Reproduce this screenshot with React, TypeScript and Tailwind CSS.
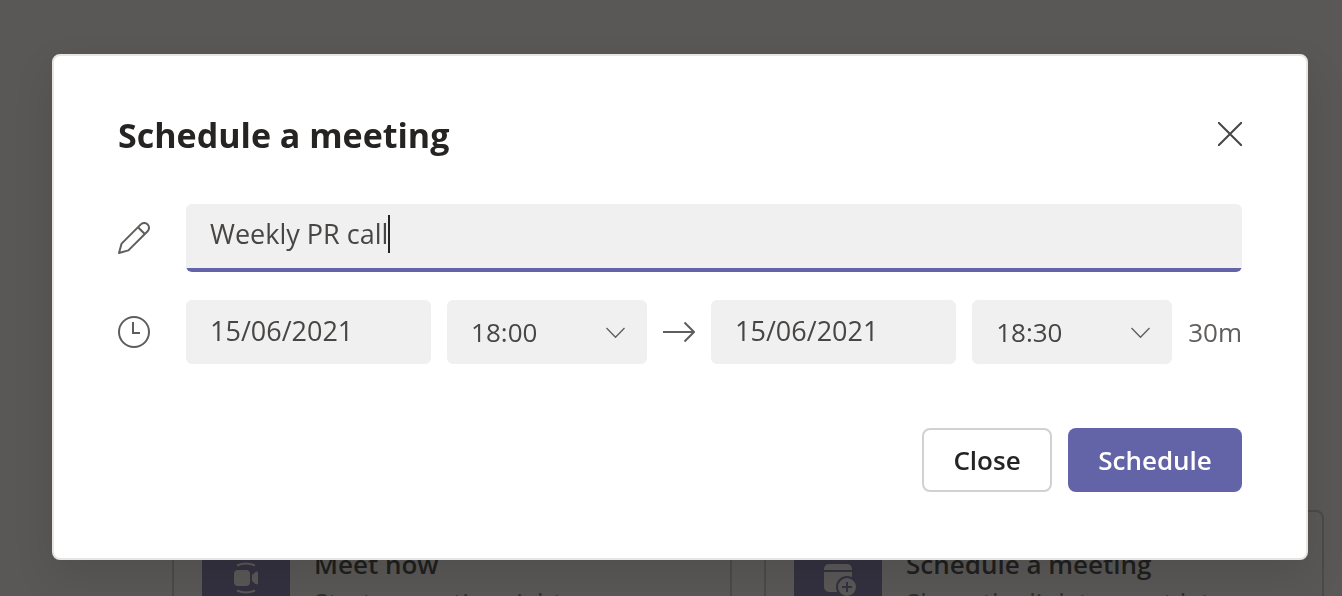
import { useState } from "react"
import type { ReactNode } from "react"

const times = ["17:30", "18:00", "18:30", "19:00"]

function PencilIcon() {
  return (
    <svg className="size-8" viewBox="0 0 32 32" fill="none" stroke="#605e5c" strokeWidth="2" strokeLinejoin="round" aria-hidden="true">
      <path d="M1 31l2.600-9.400L22.800 2.400a4.800 4.800 0 0 1 6.800 0 4.800 4.800 0 0 1 0 6.800L10.400 28.400z" />
      <path d="M20 5.200l6.800 6.800" />
    </svg>
  )
}

function ClockIcon() {
  return (
    <svg className="size-8" viewBox="0 0 32 32" fill="none" stroke="#605e5c" strokeWidth="2" aria-hidden="true">
      <circle cx="16" cy="16" r="15" />
      <path d="M15 6v11h7" />
    </svg>
  )
}

function ArrowIcon() {
  return (
    <svg className="size-8 shrink-0" viewBox="0 0 32 32" fill="none" stroke="#605e5c" strokeWidth="2" aria-hidden="true">
      <path d="M0 16h31M21.5 6.500L31 16l-9.500 9.500" />
    </svg>
  )
}

function DateField({ label, value }: { label: string; value: string }) {
  return (
    <input
      type="text"
      aria-label={label}
      defaultValue={value}
      className="h-16 w-0 min-w-0 flex-1 rounded-md bg-[#f0f0f0] px-6 pb-1 text-[27px] text-[#484644] outline-none"
    />
  )
}

function TimeField({ label, value }: { label: string; value: string }) {
  return (
    <div className="relative w-[200px] shrink-0">
      <select
        aria-label={label}
        defaultValue={value}
        className="h-16 w-full appearance-none rounded-md bg-[#f0f0f0] px-6 text-[26px] text-[#484644] outline-none"
      >
        {times.map((time) => (
          <option key={time}>{time}</option>
        ))}
      </select>
      <svg
        className="pointer-events-none absolute top-[27px] right-[21px] h-3 w-5"
        viewBox="0 0 20 12"
        fill="none"
        stroke="#605e5c"
        strokeWidth="1.300"
        aria-hidden="true"
      >
        <path d="M0.500 1l9 9.300L18.500 1" />
      </svg>
    </div>
  )
}

function ActionCard({ title, text, icon }: { title: string; text: string; icon: ReactNode }) {
  return (
    <div className="flex items-start gap-6 rounded-lg border-2 border-[#4c4a48] px-7 py-[22px]">
      <div className="flex size-[88px] shrink-0 items-center justify-center bg-[#33313f]">{icon}</div>
      <div className="pt-3 whitespace-nowrap">
        <p className="text-[26px] leading-9 font-semibold text-[#201f1e]">{title}</p>
        <p className="mt-1 text-[26px] leading-8 text-[#32312f]">{text}</p>
      </div>
    </div>
  )
}

export default function App() {
  const [title, setTitle] = useState("Weekly PR call")

  return (
    <div className="h-screen overflow-hidden bg-[#595856] font-['Open_Sans','Noto_Sans',sans-serif]">
      <div className="grid grid-cols-2 gap-8 pt-[510px] pr-[18px] pl-[172px]">
        <ActionCard
          title="Meet now"
          text="Start a meeting right away"
          icon={
            <svg className="size-8" viewBox="0 0 32 32" fill="#595856" aria-hidden="true">
              <rect x="4" y="8" width="16" height="16" rx="4" />
              <path d="M22 13l3.500-3c1-.8 2.500-.3 2.500 1v10c0 1.300-1.500 1.800-2.500 1L22 19z" />
              <path d="M7 3.500q9-4 18 0M7 28.500q9 4 18 0" fill="none" stroke="#595856" strokeWidth="2" />
            </svg>
          }
        />
        <ActionCard
          title="Schedule a meeting"
          text="Share the link to meet later"
          icon={
            <svg className="size-10" viewBox="0 0 40 40" aria-hidden="true">
              <path d="M6 12v-1a5 5 0 0 1 5-5h18a5 5 0 0 1 5 5v1zM6 14h28v20H11a5 5 0 0 1-5-5z" fill="#595856" />
              <circle cx="29" cy="29" r="11" fill="#33313f" />
              <circle cx="29" cy="29" r="9" fill="#595856" />
              <path d="M29 24v10M24 29h10" stroke="#33313f" strokeWidth="2" />
            </svg>
          }
        />
      </div>

      {/* Dialog */}
      <div className="fixed inset-0 pt-[54px] pr-[34px] pl-[52px]">
        <form
          role="dialog"
          aria-labelledby="dialog-title"
          onSubmit={(e) => e.preventDefault()}
          className="rounded-lg border-2 border-[#e8e6e4] bg-white px-16 pt-[60px] pb-[66px] shadow-[0_16px_40px_rgba(0,0,0,0.1)]"
        >
          <div className="flex h-10 items-center justify-between">
            <h1 id="dialog-title" className="pb-0.5 text-[34px] leading-10 font-bold text-[#252423]">
              Schedule a meeting
            </h1>
            <button type="button" aria-label="Dismiss" className="pb-1">
              <svg className="size-6" viewBox="0 0 24 24" stroke="#484644" strokeWidth="2" aria-hidden="true">
                <path d="M0 0l24 24M24 0L0 24" />
              </svg>
            </button>
          </div>

          <div className="mt-12 flex items-center gap-9">
            <PencilIcon />
            <label className="flex h-[68px] flex-1 items-center rounded-md bg-[linear-gradient(to_top,#6264a7_4px,#f0f0f0_4px)] px-6 pb-2">
              <input
                type="text"
                aria-label="Meeting title"
                value={title}
                onChange={(e) => setTitle(e.target.value)}
                className="field-sizing-content bg-transparent text-[27px] text-[#484644] caret-transparent outline-none"
              />
              <span className="h-[38px] w-0.5 bg-[#252423]" />
            </label>
          </div>

          <div className="mt-7 flex items-center">
            <ClockIcon />
            <div className="ml-9 flex flex-1 items-center gap-4">
              <DateField label="Start date" value="15/06/2021" />
              <TimeField label="Start time" value="18:00" />
              <ArrowIcon />
              <DateField label="End date" value="15/06/2021" />
              <TimeField label="End time" value="18:30" />
              <span className="text-[26px] text-[#605e5c]">30m</span>
            </div>
          </div>

          <div className="mt-16 flex justify-end gap-4">
            <button type="button" className="h-16 w-[130px] rounded-lg border-2 border-[#d1d1d1] text-[26px] font-semibold text-[#252423]">
              Close
            </button>
            <button type="submit" className="h-16 w-[174px] rounded-lg bg-[#6264a7] text-[26px] font-semibold text-white">
              Schedule
            </button>
          </div>
        </form>
      </div>
    </div>
  )
}
